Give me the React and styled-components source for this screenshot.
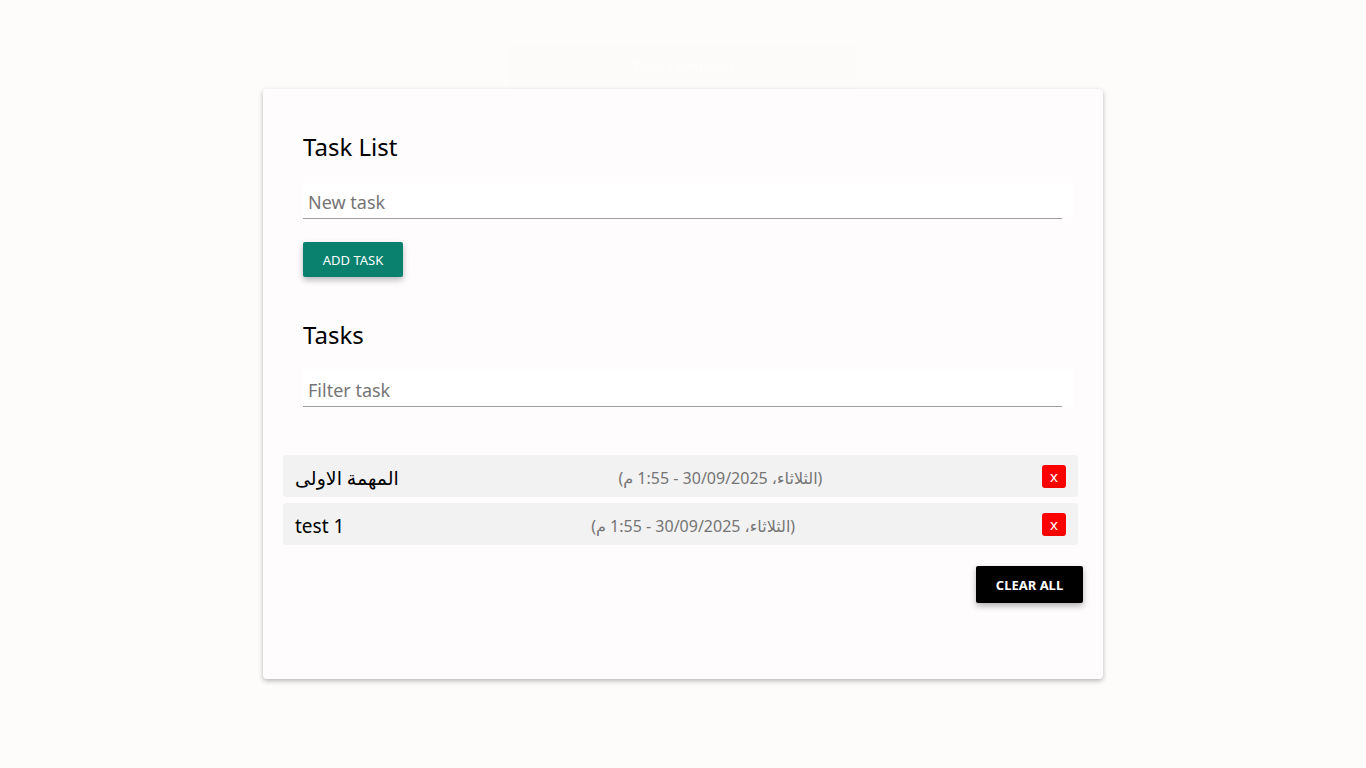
import styled, { createGlobalStyle } from 'styled-components';

const GlobalStyle = createGlobalStyle`
    body {
        margin: 0;
        background-color: #fdfcfa;
        font-family: 'Noto Sans', 'DejaVu Sans', sans-serif;
    }
`

const tasks = [
    { id: 1, name: 'المهمة الاولى', date: '(الثلاثاء، 30/09/2025 - 1:55 م)' },
    { id: 2, name: 'test 1', date: '(الثلاثاء، 30/09/2025 - 1:55 م)' },
];

function App() {
    return (
        <>
        <GlobalStyle />
        <Page>
            <Toast>Task removed</Toast>
            <Card>
                <Form>
                    <Title>Task List</Title>
                    <Field>
                        <Input placeholder="New task" />
                    </Field>
                    <AddButton>Add task</AddButton>
                </Form>
                <Form>
                    <Title>Tasks</Title>
                    <Field>
                        <Input placeholder="Filter task" />
                    </Field>
                </Form>
                <List>
                    {tasks.map((task) => (
                        <Item key={task.id}>
                            <Name>{task.name}</Name>
                            <Date dir="rtl">{task.date}</Date>
                            <Delete>x</Delete>
                        </Item>
                    ))}
                </List>
                <Footer>
                    <ClearButton>Clear all</ClearButton>
                </Footer>
            </Card>
        </Page>
        </>
    );
}

export default App;

const Page = styled.main`
    display: flex;
    flex-direction: column;
    align-items: center;
    padding-top: 44px;
    min-height: 768px;
    box-sizing: border-box;
`

const Toast = styled.div`
    width: 345px;
    height: 45px;
    box-sizing: border-box;
    background-color: #fcfbf9;
    box-shadow: 0 1px 2px rgba(0, 0, 0, 0.02);
    color: rgba(255, 255, 255, 0.6);
    font-size: 16px;
    display: flex;
    align-items: center;
    justify-content: center;
`

const Card = styled.section`
    width: 840px;
    height: 590px;
    box-sizing: border-box;
    background-color: #fefcfd;
    border-radius: 4px;
    box-shadow: 0 2px 5px rgba(0, 0, 0, 0.28);
    padding: 42px 20px 0 20px;
    display: flex;
    flex-direction: column;
`

const Form = styled.div`
    display: flex;
    flex-direction: column;
    align-items: flex-start;
    padding: 0 10px 0 20px;
`

const Title = styled.h2`
    margin: 0;
    font-size: 24px;
    font-weight: 400;
    line-height: 32px;
    color: #000;
`

const Field = styled.div`
    margin-top: 18px;
    width: 770px;
    height: 38px;
    background-color: #ffffff;
`

const Input = styled.input`
    display: block;
    width: 759px;
    height: 38px;
    box-sizing: border-box;
    border: none;
    border-bottom: 1px solid #9e9e9e;
    background: transparent;
    outline: none;
    padding: 4px 5px 0 5px;
    font-family: 'Noto Sans', sans-serif;
    font-size: 18px;
    color: #000;
    &::placeholder {
        color: #757575;
    }
`

const AddButton = styled.button`
    margin-top: 23px;
    margin-bottom: 42px;
    width: 100px;
    height: 35px;
    border: none;
    border-radius: 2px;
    background-color: #0a806f;
    color: #ffffff;
    font-family: 'Noto Sans', sans-serif;
    font-size: 13px;
    text-transform: uppercase;
    box-shadow: 0 3px 6px rgba(0, 0, 0, 0.28);
`

const List = styled.ul`
    list-style: none;
    margin: 48px 5px 0 0;
    padding: 0;
    display: flex;
    flex-direction: column;
    gap: 6px;
`

const Item = styled.li`
    display: flex;
    justify-content: space-between;
    align-items: center;
    height: 42px;
    padding: 0 12px;
    background-color: #f2f2f2;
    border-radius: 4px;
`

const Name = styled.span`
    margin-top: 3px;
    font-size: 19px;
    color: #000;
`

const Date = styled.span`
    margin-top: 3px;
    font-size: 16px;
    color: #757575;
`

const Delete = styled.button`
    width: 24px;
    height: 23px;
    padding: 0;
    border: none;
    border-radius: 3px;
    background-color: #ff0000;
    color: #ffffff;
    font-family: 'Noto Sans', sans-serif;
    font-size: 15px;
    line-height: 20px;
`

const Footer = styled.div`
    display: flex;
    justify-content: flex-end;
    margin-top: 21px;
`

const ClearButton = styled.button`
    width: 107px;
    height: 37px;
    border: none;
    border-radius: 2px;
    background-color: #000000;
    color: #ffffff;
    font-family: 'Noto Sans', sans-serif;
    font-size: 13px;
    font-weight: 700;
    text-transform: uppercase;
    box-shadow: 0 3px 6px rgba(0, 0, 0, 0.3);
`
